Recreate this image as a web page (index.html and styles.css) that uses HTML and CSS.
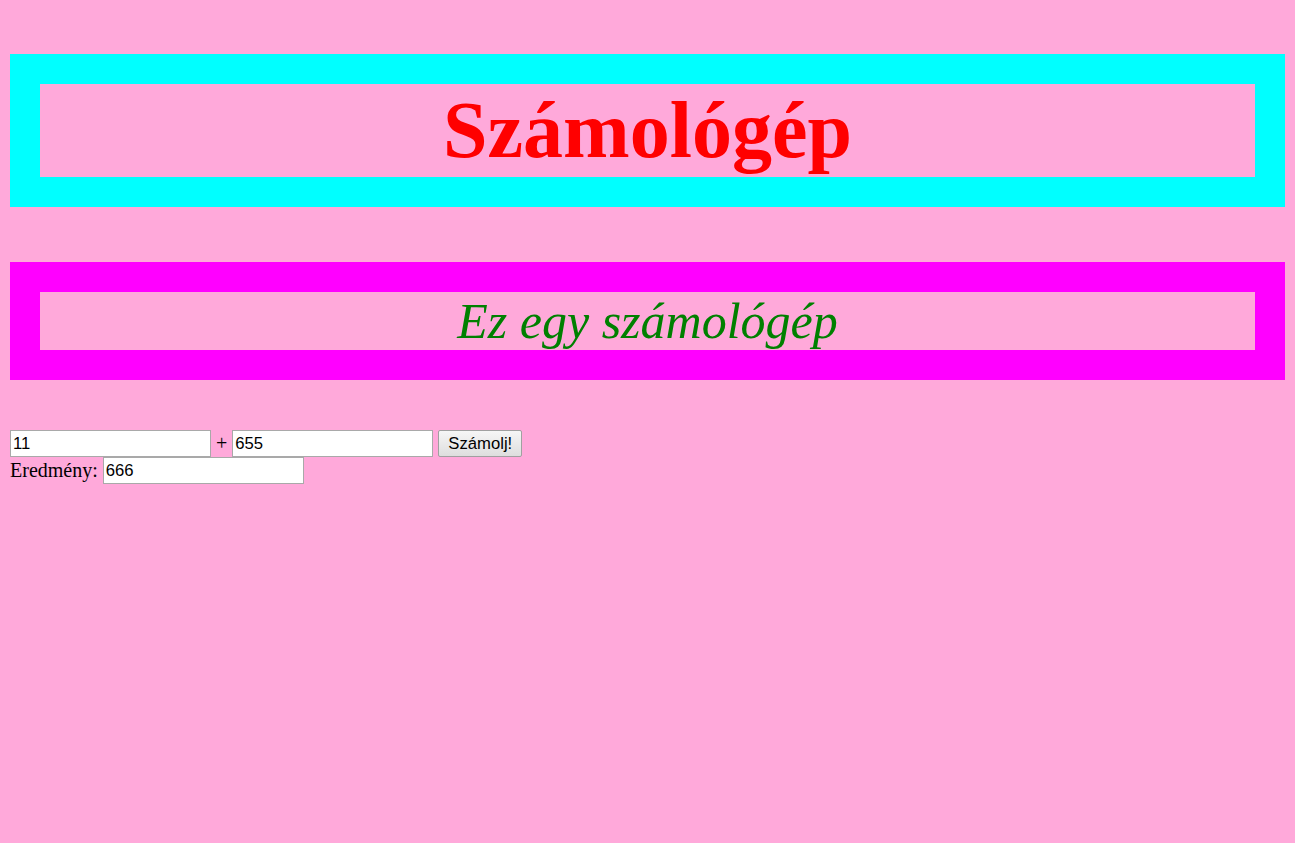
FILE: index.html
```html
<!DOCTYPE html>
<html lang="hu">
<head>
<meta charset="utf-8">
<title>Számológép</title>
<link rel="stylesheet" href="styles.css">
</head>
<body>
<h1 class="title">Számológép</h1>
<h2 class="subtitle">Ez egy számológép</h2>
<form class="calc">
  <div class="row">
    <input class="field" type="text" value="11">
    <span class="op">+</span>
    <input class="field" type="text" value="655">
    <button class="btn" type="button">Számolj!</button>
  </div>
  <div class="row">
    <span class="label">Eredmény:</span>
    <input class="field" type="text" value="666">
  </div>
</form>
</body>
</html>
```

FILE: styles.css
```css
html, body {
  background: #ffa9da;
}
body {
  margin: 0;
  padding: 10px;
  font-family: "Liberation Serif", "Times New Roman", serif;
  font-size: 20px;
  color: #000;
}
.title {
  margin: 44px 0 0 0;
  border: 30px solid #00ffff;
  font-size: 80px;
  line-height: 93px;
  font-weight: bold;
  color: #ff0000;
  text-align: center;
}
.subtitle {
  margin: 55px 0 0 0;
  border: 30px solid #ff00ff;
  font-size: 50px;
  line-height: 58px;
  font-weight: normal;
  font-style: italic;
  color: #008000;
  text-align: center;
}
.calc {
  margin-top: 50px;
}
.row {
  display: flex;
  align-items: center;
  gap: 5px;
  height: 27px;
}
.field {
  box-sizing: border-box;
  width: 201px;
  height: 27px;
  margin: 0;
  border: 1px solid #a9a9a9;
  padding: 1px 2px;
  background: #fff;
  font-family: "Liberation Sans", Arial, sans-serif;
  font-size: 16.67px;
  color: #000;
}
.op, .label {
  line-height: 27px;
}
.btn {
  box-sizing: border-box;
  width: 84px;
  height: 27px;
  margin: 0;
  padding: 0 6px;
  border: 1px solid #a0a0a0;
  border-radius: 2px;
  background: linear-gradient(#f6f6f6, #dedede);
  font-family: "Liberation Sans", Arial, sans-serif;
  font-size: 16.67px;
  color: #000;
}
```
